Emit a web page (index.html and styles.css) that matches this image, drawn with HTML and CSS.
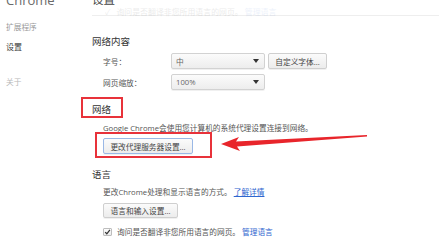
FILE: index.html
```html
<!DOCTYPE html>
<html lang="zh-CN">
<head>
  <meta charset="UTF-8">
  <title>设置</title>
  <link rel="stylesheet" href="styles.css">
</head>
<body>
  <div class="page">
    <!-- 左侧导航 -->
    <div class="sidebar">
      <div class="brand">Chrome</div>
      <div class="nav-item nav-ext">扩展程序</div>
      <div class="nav-item nav-current">设置</div>
      <div class="nav-item nav-about">关于</div>
    </div>

    <!-- 设置内容 -->
    <div class="main">
      <div class="main-header">
        <div class="main-title">设置</div>
        <div class="ghost-row">
          <span class="ghost-check">✓</span>
          询问是否翻译非您所用语言的网页。 <span class="ghost-link">管理语言</span>
        </div>
      </div>

      <div class="section section-content">
        <h3>网络内容</h3>
        <div class="form-row">
          <span class="label">字号：</span>
          <div class="select"><span>中</span><i class="caret"></i></div>
          <button class="btn btn-font">自定义字体...</button>
        </div>
        <div class="form-row row-zoom">
          <span class="label">网页缩放：</span>
          <div class="select"><span>100%</span><i class="caret"></i></div>
        </div>
      </div>

      <div class="section section-network">
        <h3>网络</h3>
        <div class="body">
          <p class="desc">Google Chrome会使用您计算机的系统代理设置连接到网络。</p>
          <button class="btn btn-focus">更改代理服务器设置...</button>
        </div>
      </div>

      <div class="section section-lang">
        <h3>语言</h3>
        <div class="body">
          <p class="desc">更改Chrome处理和显示语言的方式。 <a class="link">了解详情</a></p>
          <button class="btn btn-lang">语言和输入设置...</button>
          <div class="check-row">
            <span class="checkbox">
              <svg width="9" height="8" viewBox="0 0 9 8"><path d="M1.5 4.2 L3.6 6.3 L7.6 1.2" fill="none" stroke="#333" stroke-width="1.6"/></svg>
            </span>
            <span>询问是否翻译非您所用语言的网页。 <a class="link">管理语言</a></span>
          </div>
        </div>
      </div>
    </div>
  </div>

  <!-- 标注 -->
  <div class="mark mark-title"></div>
  <div class="mark mark-button"></div>
  <svg class="arrow" width="439" height="241" viewBox="0 0 439 241">
    <polygon points="221,144 239,137 236,141.5 367,135 367,136.6 237,146.5 240,151" fill="#e8252b"/>
  </svg>
</body>
</html>
```

FILE: styles.css
```css
* {
  margin: 0;
  padding: 0;
  box-sizing: border-box;
}

body {
  width: 439px;
  height: 241px;
  overflow: hidden;
  background: #fff;
  position: relative;
  font-family: 'Open Sans', 'Noto Sans CJK SC', sans-serif;
  font-size: 7.7px;
  color: #555;
}

.page {
  display: flex;
  height: 100%;
}

/* 左侧导航 */
.sidebar {
  width: 92px;
  padding-left: 6px;
  flex-shrink: 0;
}

.brand {
  font-size: 13px;
  line-height: 13px;
  height: 13px;
  margin-top: -6px;
  color: #6a6a6a;
}

.nav-item {
  line-height: 20px;
  height: 20px;
}

.nav-ext {
  margin-top: 10px;
  color: #9a9a9a;
}

.nav-current {
  font-size: 8px;
  color: #3a3a3a;
}

.nav-about {
  margin-top: 15px;
  color: #b8b8b8;
}

/* 主区域 */
.main {
  flex: 1;
}

.main-header {
  display: flow-root;
  height: 16px;
  border-bottom: 1px solid #eeeeee;
}

.main-title {
  font-size: 11.5px;
  line-height: 12px;
  height: 12px;
  margin-top: -6px;
  color: #444;
}

.ghost-row {
  line-height: 10px;
  padding-top: 1px;
  padding-left: 13px;
  font-size: 7.9px;
  color: #000;
  opacity: 0.08;
}

.ghost-check {
  margin-right: 4px;
}

.ghost-link {
  color: #1155cc;
}

.section h3 {
  font-size: 9.5px;
  font-weight: normal;
  line-height: 14px;
  color: #333;
}

.section-content {
  margin-top: 19px;
}

.form-row {
  display: flex;
  align-items: center;
  margin-top: 4px;
  padding-left: 11px;
  height: 16px;
}

.row-zoom {
  margin-top: 5px;
}

.label {
  width: 68px;
  color: #555;
}

.select {
  width: 94px;
  height: 16px;
  display: flex;
  align-items: center;
  justify-content: space-between;
  padding: 0 5px 0 4px;
  background: linear-gradient(#fbfbfb, #ededed);
  border: 1px solid #d2d2d2;
  border-radius: 2px;
  box-shadow: 0 1px 0 rgba(0, 0, 0, 0.06);
  color: #666;
}

.caret {
  width: 0;
  height: 0;
  border-left: 3.5px solid transparent;
  border-right: 3.5px solid transparent;
  border-top: 4px solid #333;
}

.btn {
  height: 16px;
  padding: 0 6px;
  font-family: inherit;
  font-size: 7.7px;
  color: #444;
  background: linear-gradient(#fbfbfb, #ececec);
  border: 1px solid #cfcfcf;
  border-radius: 2px;
  box-shadow: 0 1px 0 rgba(0, 0, 0, 0.06);
}

.btn-font {
  margin-left: 3px;
  width: 59px;
}

.btn-focus {
  width: 90px;
  margin-top: 4px;
  border-color: #9ab8e6;
}

.btn-lang {
  width: 75px;
  height: 15px;
  margin-top: 5px;
}

.section-network {
  margin-top: 13px;
}

.section-lang {
  margin-top: 14px;
}

.body {
  padding-left: 11px;
  display: flex;
  flex-direction: column;
  align-items: flex-start;
}

.desc {
  line-height: 12px;
  margin-top: 5px;
}

.section-lang .desc {
  margin-top: 4px;
}

.link {
  color: #2f66cf;
}

.section-lang .desc .link {
  text-decoration: underline;
}

.check-row {
  display: flex;
  align-items: center;
  gap: 5px;
  margin-top: 8px;
  line-height: 12px;
}

.checkbox {
  width: 9px;
  height: 8px;
  display: flex;
  align-items: center;
  justify-content: center;
  border: 1px solid #bdbdbd;
  border-radius: 1px;
  background: linear-gradient(#fdfdfd, #ececec);
}

.checkbox svg {
  display: block;
}

/* 标注 */
.mark {
  position: absolute;
  border: 2px solid #e8323a;
}

.mark-title {
  left: 81px;
  top: 97px;
  width: 42px;
  height: 21px;
}

.mark-button {
  left: 95px;
  top: 132px;
  width: 117px;
  height: 26px;
}

.arrow {
  position: absolute;
  left: 0;
  top: 0;
}
```
